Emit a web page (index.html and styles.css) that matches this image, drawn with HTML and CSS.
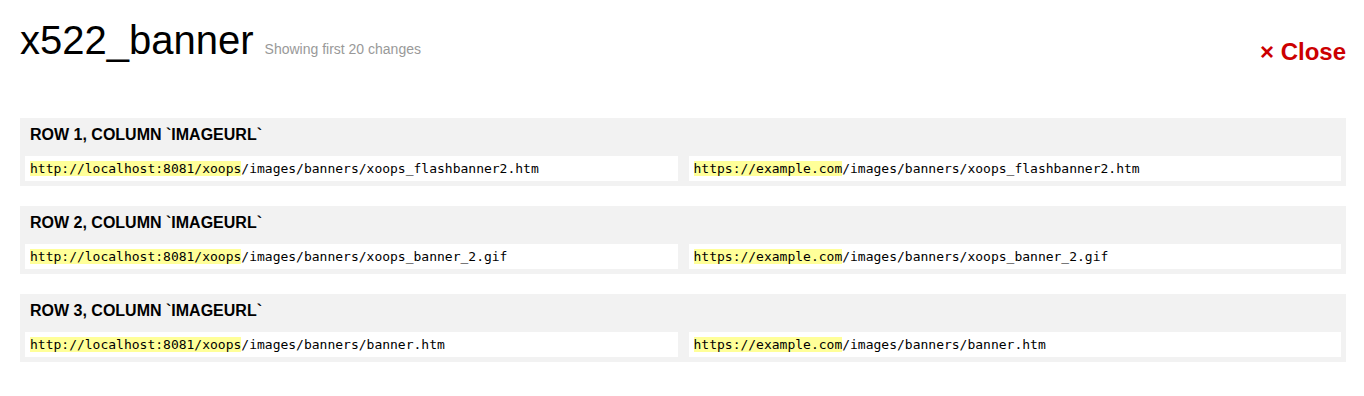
FILE: index.html
```html
<!DOCTYPE html>
<html>
<head>
<meta charset="utf-8">
<title>x522_banner</title>
<link rel="stylesheet" href="styles.css">
</head>
<body>
<div class="page">
  <header class="header">
    <div class="title-group">
      <h1 class="title">x522_banner</h1>
      <span class="subtitle">Showing first 20 changes</span>
    </div>
    <a class="close" href="#">× Close</a>
  </header>

  <section class="change">
    <h2 class="change-title">ROW 1, COLUMN `IMAGEURL`</h2>
    <div class="cells">
      <div class="cell"><span class="hl">http://localhost:8081/xoops</span>/images/banners/xoops_flashbanner2.htm</div>
      <div class="cell"><span class="hl">https://example.com</span>/images/banners/xoops_flashbanner2.htm</div>
    </div>
  </section>

  <section class="change">
    <h2 class="change-title">ROW 2, COLUMN `IMAGEURL`</h2>
    <div class="cells">
      <div class="cell"><span class="hl">http://localhost:8081/xoops</span>/images/banners/xoops_banner_2.gif</div>
      <div class="cell"><span class="hl">https://example.com</span>/images/banners/xoops_banner_2.gif</div>
    </div>
  </section>

  <section class="change">
    <h2 class="change-title">ROW 3, COLUMN `IMAGEURL`</h2>
    <div class="cells">
      <div class="cell"><span class="hl">http://localhost:8081/xoops</span>/images/banners/banner.htm</div>
      <div class="cell"><span class="hl">https://example.com</span>/images/banners/banner.htm</div>
    </div>
  </section>
</div>
</body>
</html>
```

FILE: styles.css
```css
html, body {
  margin: 0;
  padding: 0;
  background: #ffffff;
}

body {
  font-family: "Liberation Sans", Arial, sans-serif;
  color: #000;
}

.page {
  padding: 18px 18px 20px 20px;
}

.header {
  display: flex;
  justify-content: space-between;
  align-items: flex-start;
  margin-bottom: 52px;
}

.title-group {
  display: flex;
  align-items: baseline;
}

.title {
  margin: 0;
  font-size: 40px;
  font-weight: normal;
  line-height: normal;
  color: #000;
}

.subtitle {
  margin-left: 11px;
  font-size: 14px;
  color: #999999;
}

.close {
  margin-top: 20px;
  font-size: 24px;
  font-weight: bold;
  color: #cc0000;
  text-decoration: none;
  line-height: normal;
}

.change {
  background: #f2f2f2;
  padding: 0 5px 5px 5px;
  margin-bottom: 20px;
}

.change-title {
  margin: 0 0 12px 0;
  padding: 8px 5px 0 5px;
  font-size: 16px;
  line-height: 18px;
  font-weight: bold;
  color: #000;
}

.cells {
  display: grid;
  grid-template-columns: 1fr 1fr;
  column-gap: 11px;
}

.cell {
  background: #ffffff;
  padding: 5px;
  font-family: "DejaVu Sans Mono", monospace;
  font-size: 13px;
  line-height: 15px;
  color: #000;
  white-space: nowrap;
}

.hl {
  background: #ffff99;
}
```
